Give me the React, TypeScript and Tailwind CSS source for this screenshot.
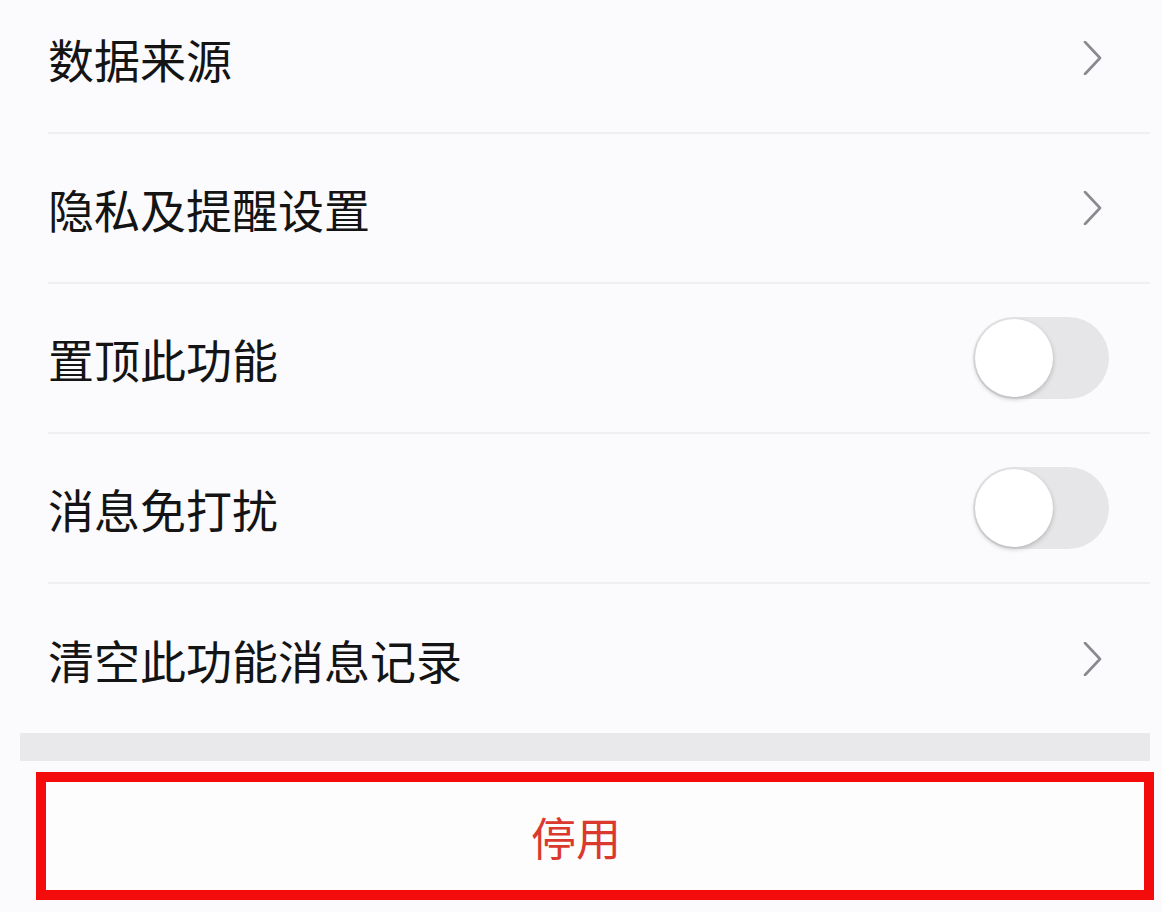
import React from "react";

type Row = { label: string; kind: "link" | "toggle" };

const rows: Row[] = [
  { label: "数据来源", kind: "link" },
  { label: "隐私及提醒设置", kind: "link" },
  { label: "置顶此功能", kind: "toggle" },
  { label: "消息免打扰", kind: "toggle" },
  { label: "清空此功能消息记录", kind: "link" },
];

function Chevron() {
  return (
    <svg width="20" height="34" viewBox="0 0 20 34" className="mr-[47px]">
      <polyline
        points="2,1 17,17 2,33"
        fill="none"
        stroke="#8a8a8e"
        strokeWidth="2.6"
        strokeLinecap="round"
        strokeLinejoin="round"
      />
    </svg>
  );
}

function Toggle() {
  return (
    <div className="mr-[41px] w-[136px] h-[82px] rounded-full bg-[#e6e6e9] p-[2px] flex items-center">
      <div className="w-[78px] h-[78px] rounded-full bg-white shadow-[0_2px_5px_rgba(0,0,0,0.22)]" />
    </div>
  );
}

export default function App() {
  return (
    <div
      className="w-[1162px] h-[912px] overflow-hidden bg-[#fbfbfd]"
      style={{ fontFamily: '"Noto Sans CJK SC", "Noto Sans", sans-serif' }}
    >
      <div className="-mt-[16px] pl-[48px] pr-[12px]">
        {rows.map((r, i) => (
          <div
            key={r.label}
            className={`flex items-center justify-between ${
              i < rows.length - 1 ? "h-[150px] border-b-2 border-[#efeff1]" : "h-[149px]"
            }`}
          >
            <span className="text-[46px] leading-none text-[#141414]">{r.label}</span>
            {r.kind === "link" ? <Chevron /> : <Toggle />}
          </div>
        ))}
      </div>
      <div className="ml-[20px] mr-[12px] h-[28px] bg-[#e9e9eb]" />
      <div className="mt-[11px] ml-[36px] mr-[8px] h-[128px] border-[10px] border-[#f40c0c] bg-[#fdfdfe] pr-[38px] flex items-center justify-center">
        <span className="text-[45px] leading-none text-[#da3a2e]">停用</span>
      </div>
    </div>
  );
}
